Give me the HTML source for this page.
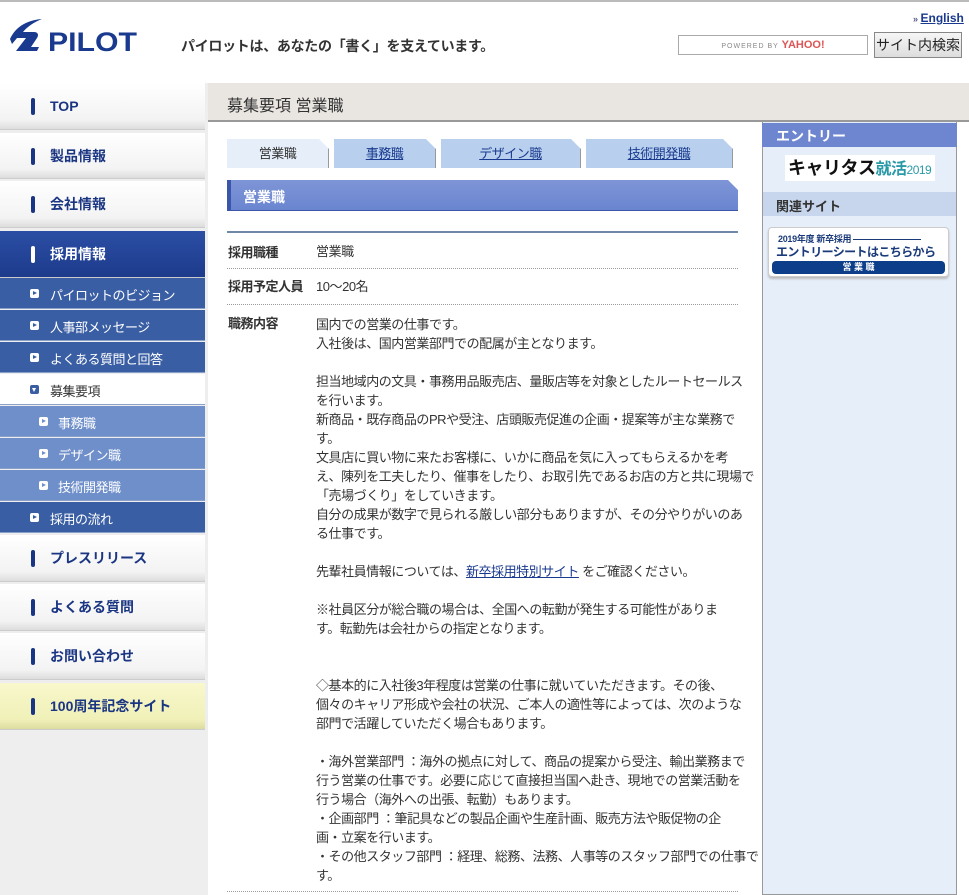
<!DOCTYPE html>
<html><head><meta charset="utf-8">
<style>
*{margin:0;padding:0;box-sizing:border-box}
body{width:969px;height:895px;overflow:hidden;background:#fff;font-family:"Liberation Sans","Noto Sans CJK JP",sans-serif;font-size:13px;color:#333;position:relative}
.abs{position:absolute}
#top{left:0;top:0;width:969px;height:2px;background:#bbb}
#tag{left:181px;top:36px;font-size:14px;font-weight:bold;color:#333;letter-spacing:-0.3px}
#eng{left:913px;top:11px;font-size:12px;font-weight:bold}
#eng a{color:#1a3a8f;text-decoration:underline}
#srch{left:678px;top:35px;width:190px;height:20px;border:1px solid #aaa;font-size:7px;color:#888;text-align:center;line-height:18px;letter-spacing:1px}
#srch b{color:#d55;font-size:11px;letter-spacing:0}
#btn{left:874px;top:32px;width:88px;height:26px;border:1px solid #888;background:linear-gradient(#f6f6f6,#ddd);font-size:14px;text-align:center;line-height:24px;color:#222}
#side{left:0;top:83px;width:208px;height:812px;background:#eee}
.nv{position:absolute;left:0;width:205px;background:linear-gradient(#fff,#f3f3f3 80%,#ddd);border-bottom:1px solid #ccc;font-weight:bold;font-size:14px;color:#1a3582}
.nv:before{content:"";position:absolute;left:31px;top:50%;margin-top:-8px;width:4px;height:17px;background:#1a3582;border-radius:2px}
.nv span{position:absolute;left:50px;top:50%;transform:translateY(-50%)}
.sb{position:absolute;left:0;width:205px;height:31px;background:#3a5ea3;color:#fff;font-size:13px;border-bottom:1px solid #8aa0c8;letter-spacing:-0.5px}
.sb span{position:absolute;left:50px;top:7px}
.sb:before{content:"";position:absolute;left:30px;top:11px;width:9px;height:9px;background:#fff;border-radius:2px}
.sb:after{content:"";position:absolute;left:33px;top:13px;border-left:4px solid #3a5ea3;border-top:2.5px solid transparent;border-bottom:2.5px solid transparent}
.sb.l{background:#6f8fca}.sb.l span{left:58px}.sb.l:before{left:39px}.sb.l:after{left:42px;border-left-color:#6f8fca}
.sb.w{background:#fff;color:#333}
.sb.w:before{background:#3a5ea3}.sb.w:after{left:32px;top:14px;border-left:2.5px solid transparent;border-right:2.5px solid transparent;border-top:4px solid #fff;border-bottom:0}
#tbar{left:208px;top:83px;width:761px;height:39px;background:#e9e6e1;border-bottom:2px solid #999;font-size:16px;color:#333;padding:9px 0 0 19px}
.tab{position:absolute;top:139px;height:29px;background:#b8d0ee;border-right:1px solid #999;text-align:center;line-height:29px;font-size:13px;letter-spacing:-0.5px}
.tab a{color:#1a3a8f;text-decoration:underline}
.tab:after{content:"";position:absolute;right:-1px;top:0;border-top:10px solid #fff;border-left:10px solid transparent}
#h2{left:227px;top:180px;width:511px;height:31px;background:linear-gradient(#7e95d6,#6a85d0);border-left:4px solid #3b55a8;border-bottom:1px solid #3b55a8;color:#fff;font-weight:bold;font-size:14px;padding:7px 0 0 12px}
#h2:after{content:"";position:absolute;right:0;top:0;border-top:10px solid #fff;border-left:10px solid transparent}
#tbl{left:227px;top:231px;width:511px;border-top:2px solid #7088a8}
.row{position:relative;border-bottom:1px dotted #999}
.row .k{position:absolute;left:1px;font-weight:bold;font-size:13px;color:#333;letter-spacing:-0.5px}
.row .v{margin-left:89px;line-height:19px;white-space:nowrap;letter-spacing:-0.45px}
a{color:#1a3a8f;text-decoration:underline}
#rc{left:762px;top:122px;width:195px;height:773px;background:#e6eefa;border:1px solid #999;border-top:0}
</style></head><body>
<div id="top" class="abs"></div>
<svg class="abs" style="left:8px;top:17px" width="135" height="40" viewBox="0 0 135 40">
<path d="M2 22 C8 9 20 3 34 2 C26 5 19 10 15 15 L26 15 C30 15 31 18 29 21 L23 30 L31 30 L29 34 L8 34 L18 21 L9 21 L4 27 Z" fill="#1a3a8f"/>
<text x="40" y="34" font-family="Liberation Sans" font-weight="bold" font-size="27" fill="#1a3a8f" textLength="89" lengthAdjust="spacingAndGlyphs">PILOT</text>
</svg>
<div id="tag" class="abs">パイロットは、あなたの「書く」を支えています。</div>
<div id="eng" class="abs"><span style="color:#558;font-size:9px">» </span><a>English</a></div>
<div id="srch" class="abs">POWERED BY <b>YAHOO!</b></div>
<div id="btn" class="abs">サイト内検索</div>

<div id="side" class="abs"></div>
<div class="nv" style="top:83px;height:47px"><span>TOP</span></div>
<div class="nv" style="top:133px;height:46px"><span>製品情報</span></div>
<div class="nv" style="top:181px;height:47px"><span>会社情報</span></div>
<div class="nv" style="top:231px;height:47px;background:linear-gradient(#2b4ea4,#1d3b8c);color:#fff"><span>採用情報</span></div>
<div class="sb" style="top:278px"><span>パイロットのビジョン</span></div>
<div class="sb" style="top:310px"><span>人事部メッセージ</span></div>
<div class="sb" style="top:342px"><span>よくある質問と回答</span></div>
<div class="sb w" style="top:374px"><span>募集要項</span></div>
<div class="sb l" style="top:406px"><span>事務職</span></div>
<div class="sb l" style="top:438px"><span>デザイン職</span></div>
<div class="sb l" style="top:470px"><span>技術開発職</span></div>
<div class="sb" style="top:502px"><span>採用の流れ</span></div>
<div class="nv" style="top:535px;height:47px"><span>プレスリリース</span></div>
<div class="nv" style="top:584px;height:47px"><span>よくある質問</span></div>
<div class="nv" style="top:633px;height:47px"><span>お問い合わせ</span></div>
<div class="nv" style="top:683px;height:47px;background:linear-gradient(#f8f8cc,#f0f0b8 80%,#dcdca0)"><span>100周年記念サイト</span></div>
<style>.nv[style*="2b4ea4"]:before{background:#fff}</style>

<div id="tbar" class="abs">募集要項 営業職</div>
<div class="tab" style="left:227px;width:102px;background:#e6eefa">営業職</div>
<div class="tab" style="left:334px;width:102px"><a>事務職</a></div>
<div class="tab" style="left:441px;width:140px"><a>デザイン職</a></div>
<div class="tab" style="left:586px;width:147px"><a>技術開発職</a></div>
<div id="h2" class="abs">営業職</div>

<div id="tbl" class="abs">
<div class="row" style="height:36px"><span class="k" style="top:9px">採用職種</span><div class="v" style="padding-top:9px">営業職</div></div>
<div class="row" style="height:36px"><span class="k" style="top:7px">採用予定人員</span><div class="v" style="padding-top:8px">10〜20名</div></div>
<div class="row" style="height:587px"><span class="k" style="top:8px">職務内容</span><div class="v" style="padding-top:10px">
国内での営業の仕事です。<br>入社後は、国内営業部門での配属が主となります。<br><br>
担当地域内の文具・事務用品販売店、量販店等を対象としたルートセールス<br>を行います。<br>
新商品・既存商品のPRや受注、店頭販売促進の企画・提案等が主な業務で<br>す。<br>
文具店に買い物に来たお客様に、いかに商品を気に入ってもらえるかを考<br>え、陳列を工夫したり、催事をしたり、お取引先であるお店の方と共に現場で<br>「売場づくり」をしていきます。<br>
自分の成果が数字で見られる厳しい部分もありますが、その分やりがいのあ<br>る仕事です。<br><br>
先輩社員情報については、<a>新卒採用特別サイト</a> をご確認ください。<br><br>
※社員区分が総合職の場合は、全国への転勤が発生する可能性がありま<br>す。転勤先は会社からの指定となります。<br><br><br>
◇基本的に入社後3年程度は営業の仕事に就いていただきます。その後、<br>個々のキャリア形成や会社の状況、ご本人の適性等によっては、次のような<br>部門で活躍していただく場合もあります。<br><br>
・海外営業部門 ：海外の拠点に対して、商品の提案から受注、輸出業務まで<br>行う営業の仕事です。必要に応じて直接担当国へ赴き、現地での営業活動を<br>行う場合（海外への出張、転勤）もあります。<br>
・企画部門 ：筆記具などの製品企画や生産計画、販売方法や販促物の企<br>画・立案を行います。<br>
・その他スタッフ部門 ：経理、総務、法務、人事等のスタッフ部門での仕事で<br>す。
</div></div>
</div>

<div id="rc" class="abs"></div>
<div class="abs" style="left:762px;top:123px;width:195px;height:24px;background:#6d86cf;color:#fff;font-size:14px;font-weight:bold;padding:3px 0 0 14px">エントリー</div>
<div class="abs" style="left:785px;top:155px;width:150px;height:26px;background:#fff;font-size:18px;font-weight:bold;color:#111;padding:0 0 0 3px;line-height:26px;white-space:nowrap;letter-spacing:-0.5px">キャリタス<span style="color:#2a9aa8;font-size:16px">就活<span style="font-weight:normal;font-size:12px">2019</span></span></div>
<div class="abs" style="left:763px;top:192px;width:193px;height:24px;background:#c7d6ec;font-size:13px;font-weight:bold;color:#333;padding:4px 0 0 13px">関連サイト</div>
<div class="abs" style="left:768px;top:227px;width:181px;height:50px;background:#fff;border:1px solid #ccc;border-radius:4px;box-shadow:0 2px 2px #bbb;color:#1a3a7a;font-weight:bold;white-space:nowrap">
<div style="font-size:9px;padding:4px 0 0 9px;letter-spacing:-0.3px">2019年度 新卒採用 <span style="display:inline-block;width:68px;border-top:1px solid #1a3a7a;vertical-align:middle"></span></div>
<div style="font-size:12px;padding-left:7px;line-height:15px;letter-spacing:-0.6px">エントリーシートはこちらから</div>
<div style="margin:1px 3px 0;height:13px;background:#0d3e8a;border-radius:4px;color:#fff;font-size:9px;text-align:center;line-height:13px">営 業 職</div>
</div>
</body></html>
